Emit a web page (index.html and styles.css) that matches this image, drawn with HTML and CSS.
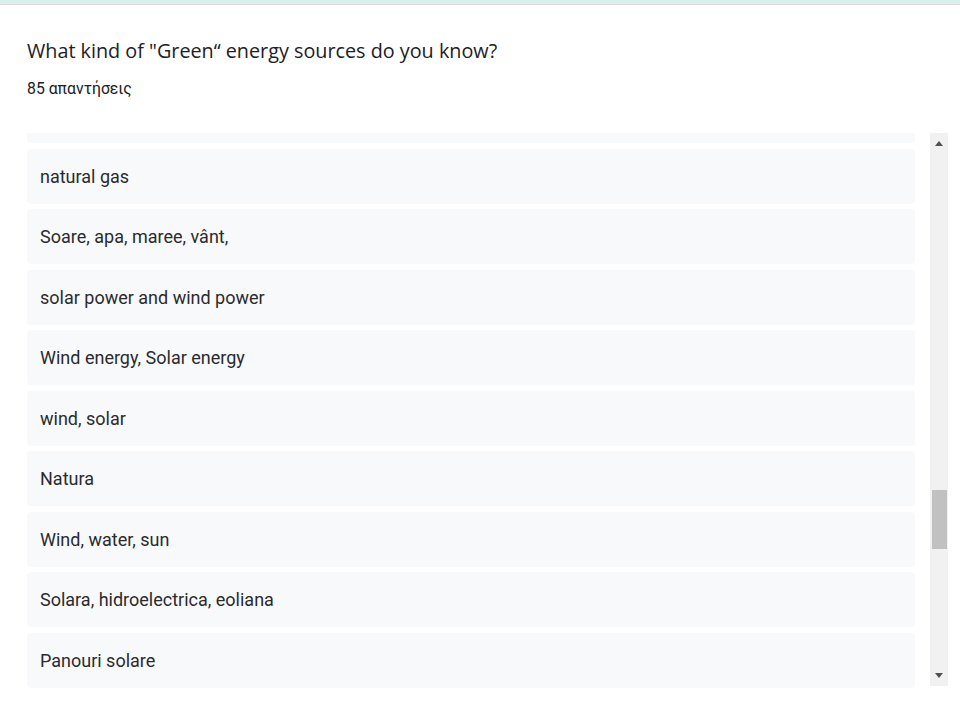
FILE: index.html
```html
<!DOCTYPE html>
<html lang="el">
<head>
    <meta charset="UTF-8">
    <meta name="viewport" content="width=device-width, initial-scale=1.0">
    <title>Απαντήσεις</title>
    <link rel="stylesheet" href="styles.css">
</head>
<body>

<div class="top-strip"></div>

<!-- κάρτα ερώτησης -->
<div class="card">
    <h2 class="question">What kind of "Green“ energy sources do you know?</h2>
    <div class="count">85 απαντήσεις</div>

    <div class="answers-box">
        <div class="answers">
            <!-- το τέλος της προηγούμενης απάντησης (κυλισμένη εκτός) -->
            <div class="answer-tail"></div>
            <div class="answer">natural gas</div>
            <div class="answer">Soare, apa, maree, vânt,</div>
            <div class="answer">solar power and wind power</div>
            <div class="answer">Wind energy, Solar energy</div>
            <div class="answer">wind, solar</div>
            <div class="answer">Natura</div>
            <div class="answer">Wind, water, sun</div>
            <div class="answer">Solara, hidroelectrica, eoliana</div>
            <div class="answer">Panouri solare</div>
        </div>

        <!-- μπάρα κύλισης -->
        <div class="scrollbar">
            <div class="arrow arrow-up"></div>
            <div class="track">
                <div class="thumb"></div>
            </div>
            <div class="arrow arrow-down"></div>
        </div>
    </div>
</div>

</body>
</html>
```

FILE: styles.css
```css
body {
    margin: 0;
    background-color: #ffffff;
    font-family: Roboto, "Liberation Sans", sans-serif;
    color: #202124;
}

.top-strip {
    height: 4px;
    background-color: #dcf1ec;
    border-bottom: 1px solid #dadce0;
}

.card {
    padding: 34px 0 0 27px;
}

.question {
    margin: 0;
    font-family: "Open Sans", sans-serif;
    font-size: 19.8px;
    font-weight: 400;
    line-height: 24px;
    color: #202124;
}

.count {
    margin-top: 16px;
    font-size: 15.8px;
    line-height: 20px;
    color: #202124;
}

.answers-box {
    display: flex;
    align-items: flex-start;
    margin-top: 34px;
}

.answers {
    width: 888px;
    height: 555px;
    overflow: hidden;
}

.answer-tail {
    height: 10px;
    margin-bottom: 5.5px;
    background-color: #f8f9fa;
    border-radius: 0 0 4px 4px;
}

.answer {
    height: 55px;
    line-height: 55px;
    margin-bottom: 5.5px;
    padding-left: 13px;
    background-color: #f8f9fa;
    border-radius: 4px;
    font-size: 18px;
    color: #2a2b2e;
}

.scrollbar {
    width: 18px;
    height: 553px;
    margin-left: 15px;
    background-color: #f1f1f1;
    display: flex;
    flex-direction: column;
    align-items: center;
}

.arrow {
    width: 0;
    height: 0;
    margin: 8px 0;
    border-left: 4px solid transparent;
    border-right: 4px solid transparent;
}

.arrow-up {
    border-bottom: 5px solid #505050;
}

.arrow-down {
    border-top: 5px solid #505050;
}

.track {
    flex: 1;
    width: 100%;
}

.thumb {
    width: 15px;
    height: 59px;
    margin: 336px auto 0;
    background-color: #c1c1c1;
}
```
